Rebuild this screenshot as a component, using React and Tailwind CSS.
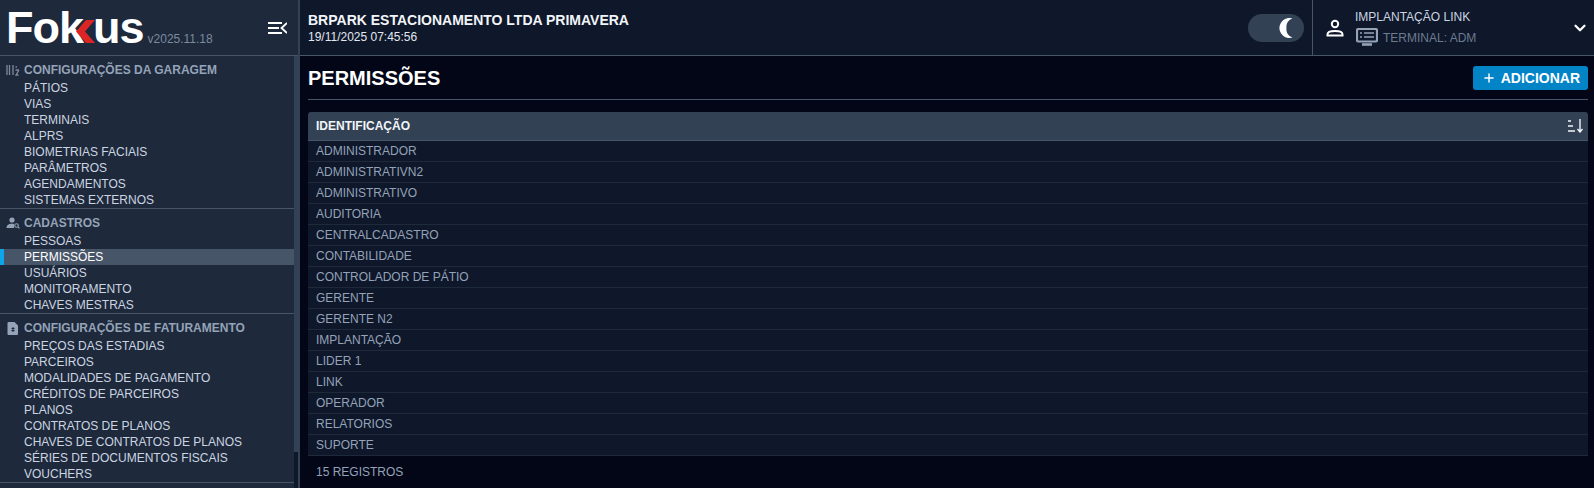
import React from 'react';
import { ChevronDown, Plus } from 'lucide-react';

const grupos = [
  {
    titulo: 'CONFIGURAÇÕES DA GARAGEM',
    icone: 'garagem',
    itens: ['PÁTIOS', 'VIAS', 'TERMINAIS', 'ALPRS', 'BIOMETRIAS FACIAIS', 'PARÂMETROS', 'AGENDAMENTOS', 'SISTEMAS EXTERNOS'],
  },
  {
    titulo: 'CADASTROS',
    icone: 'cadastros',
    itens: ['PESSOAS', 'PERMISSÕES', 'USUÁRIOS', 'MONITORAMENTO', 'CHAVES MESTRAS'],
  },
  {
    titulo: 'CONFIGURAÇÕES DE FATURAMENTO',
    icone: 'faturamento',
    itens: ['PREÇOS DAS ESTADIAS', 'PARCEIROS', 'MODALIDADES DE PAGAMENTO', 'CRÉDITOS DE PARCEIROS', 'PLANOS', 'CONTRATOS DE PLANOS', 'CHAVES DE CONTRATOS DE PLANOS', 'SÉRIES DE DOCUMENTOS FISCAIS', 'VOUCHERS'],
  },
];

const permissoes = ['ADMINISTRADOR', 'ADMINISTRATIVN2', 'ADMINISTRATIVO', 'AUDITORIA', 'CENTRALCADASTRO', 'CONTABILIDADE', 'CONTROLADOR DE PÁTIO', 'GERENTE', 'GERENTE N2', 'IMPLANTAÇÃO', 'LIDER 1', 'LINK', 'OPERADOR', 'RELATORIOS', 'SUPORTE'];

function IconeGrupo({ tipo }) {
  if (tipo === 'garagem') {
    return (
      <svg width="14" height="12" viewBox="0 0 14 12" fill="none" stroke="#7c8ba1" strokeWidth="1.3">
        <path d="M1 1v10M3.5 1v10M7 1v10M9.5 3h1.5M9.5 6h3.5M13 6l-3 5h2.5" />
      </svg>
    );
  }
  if (tipo === 'cadastros') {
    return (
      <svg width="14" height="12" viewBox="0 0 14 12" fill="#94a3b8">
        <circle cx="6" cy="3" r="2.6" />
        <path d="M0.5 11c0-3 2.5-4.3 5.5-4.3 1 0 1.5 .1 2 .3v4z" />
        <circle cx="10.5" cy="8.5" r="1.8" fill="none" stroke="#94a3b8" strokeWidth="1.1" />
        <path d="M12 10l1.5 1.3" stroke="#94a3b8" strokeWidth="1.1" />
      </svg>
    );
  }
  return (
    <svg width="12" height="13" viewBox="0 0 12 13" fill="#94a3b8">
      <path d="M1.5 0h6l3.5 3.5v8.5a1 1 0 0 1-1 1h-8.5a1 1 0 0 1-1-1v-11a1 1 0 0 1 1-1z" />
      <path d="M6 5v5M4.5 6.5h3M4.5 8.5h3" stroke="#1e293b" strokeWidth="1" fill="none" />
    </svg>
  );
}

function Logo() {
  return (
    <div className="flex items-end">
      <span className="text-[45px] leading-[38px] font-bold text-white tracking-[-1px]">Fok</span>
      <svg width="19" height="23" viewBox="0 0 19 23" className="-ml-[7px] mb-[4px]">
        <path d="M10 0h9L9 11.5 19 23h-9L0 11.5z" fill="#dc2626" />
      </svg>
      <span className="-ml-[2px] text-[45px] leading-[38px] font-bold text-white tracking-[-1px]">us</span>
    </div>
  );
}

function App() {
  return (
    <div className="flex h-[488px] w-[1594px] overflow-hidden bg-[#020617] font-['Liberation_Sans',sans-serif] text-[12px]">
      <div className="flex w-[300px] shrink-0 flex-col border-r-2 border-[#334155]">
        <div className="flex h-[56px] shrink-0 items-center justify-between border-b border-[#475569] bg-[#1e293b] pl-[6px] pr-[11px]">
          <div className="flex items-end gap-[4px]">
            <Logo />
            <span className="-mb-[1px] text-[12px] text-[#7c8aa0]">v2025.11.18</span>
          </div>
          <svg width="19" height="12" viewBox="0 0 19 12" fill="none" stroke="white" strokeWidth="1.8">
            <path d="M0 1h14M0 6h11M0 11h14M19 1l-5.5 5 5.5 5" />
          </svg>
        </div>
        <div className="flex min-h-0 flex-1 bg-[#0f172a]">
          <div className="w-[294px] shrink-0 overflow-hidden bg-[#1e293b]">
            {grupos.map((g) => (
              <div key={g.titulo} className="border-b border-[#475569] pt-[6px]">
                <div className="flex h-[16px] items-center">
                  <span className="flex w-[24px] justify-center pl-[1px]"><IconeGrupo tipo={g.icone} /></span>
                  <span className="text-[12px] font-bold text-[#94a3b8]">{g.titulo}</span>
                </div>
                <div className="mt-[2px]">
                  {g.itens.map((item) => (
                    <div
                      key={item}
                      className={
                        item === 'PERMISSÕES'
                          ? 'h-[16px] border-l-4 border-[#0ea5e9] bg-[#475569] pl-[20px] leading-[16px] text-white'
                          : 'h-[16px] pl-[24px] leading-[16px] text-[#cbd5e1]'
                      }
                    >
                      {item}
                    </div>
                  ))}
                </div>
              </div>
            ))}
          </div>
          <div className="h-[396px] w-[4px] shrink-0 bg-[#334155]" />
        </div>
      </div>

      <div className="flex min-w-0 flex-1 flex-col">
        <div className="flex h-[56px] shrink-0 items-center border-b border-[#475569] bg-[#0f172a]">
          <div className="flex-1 pl-2 pt-[1px]">
            <div className="text-[14px] font-bold leading-[18px] text-[#f1f5f9]">BRPARK ESTACIONAMENTO LTDA PRIMAVERA</div>
            <div className="text-[12px] leading-[16px] text-[#e2e8f0]">19/11/2025 07:45:56</div>
          </div>
          <div className="mr-2 flex h-[28px] w-[56px] items-center justify-end rounded-full bg-[#334155] pr-[11px]">
            <svg width="15" height="20" viewBox="0 0 15 20" fill="white">
              <path d="M12 0A10 10 0 1 0 14.5 19.5A8.5 8.5 0 0 1 8.5 10A8.5 8.5 0 0 1 14.5 .5A10 10 0 0 0 12 0z" />
            </svg>
          </div>
          <div className="flex h-full w-[282px] items-center border-l border-[#475569]">
            <svg width="18" height="18" viewBox="0 0 18 18" fill="none" stroke="white" strokeWidth="2" className="ml-[13px]">
              <circle cx="9" cy="5" r="3.2" />
              <path d="M1.5 16.5v-1.2c0-2 3.5-3.3 7.5-3.3s7.5 1.3 7.5 3.3v1.2z" />
            </svg>
            <div className="ml-[11px] flex-1">
              <div className="text-[12px] leading-[16px] text-[#cbd5e1]">IMPLANTAÇÃO LINK</div>
              <div className="mt-[3px] flex items-center gap-[5px] text-[12px] text-[#6b7b91]">
                <svg width="22" height="18" viewBox="0 0 22 18" fill="none" stroke="#94a3b8" strokeWidth="2.2" className="ml-[1px]">
                  <rect x="1" y="1" width="20" height="12.5" rx="1.5" />
                  <path d="M4 5h2M8 5h10M4 9h2M8 9h10" strokeWidth="1.6" />
                  <path d="M6 16.5h10" strokeWidth="2.6" />
                </svg>
                <span className="pt-[1px]">TERMINAL: ADM</span>
              </div>
            </div>
            <ChevronDown size={18} strokeWidth={3} className="mr-[5px] text-white" />
          </div>
        </div>

        <div className="flex-1 pl-2 pr-[6px]">
          <div className="flex h-[44px] items-center justify-between border-b border-[#475569] pt-[1px]">
            <h1 className="text-[20px] font-bold text-white">PERMISSÕES</h1>
            <button className="flex h-[24px] items-center gap-[5px] rounded-[3px] bg-[#0284c7] pl-[9px] pr-[8px] text-[14px] font-bold text-white">
              <Plus size={14} strokeWidth={2.5} />
              ADICIONAR
            </button>
          </div>
          <div className="mt-[12px]">
            <div className="flex h-[29px] items-center justify-between rounded-t-[3px] border-b border-[#475569] bg-[#334155] pl-2 pr-[5px] font-bold text-[#f1f5f9]">
              IDENTIFICAÇÃO
              <svg width="16" height="14" viewBox="0 0 16 14" fill="none" stroke="#f1f5f9" strokeWidth="1.4">
                <path d="M1 2h3M1 7h5M1 12h7M13 0v12M10.5 10l2.5 3 2.5-3" />
              </svg>
            </div>
            {permissoes.map((p) => (
              <div key={p} className="flex h-[21px] items-center border-b border-[#1e293b] bg-[#0f172a] px-2 text-[#94a3b8]">
                {p}
              </div>
            ))}
          </div>
          <div className="mt-[7px] pl-2 text-[#94a3b8]">15 REGISTROS</div>
        </div>
      </div>
    </div>
  );
}

export default App;
